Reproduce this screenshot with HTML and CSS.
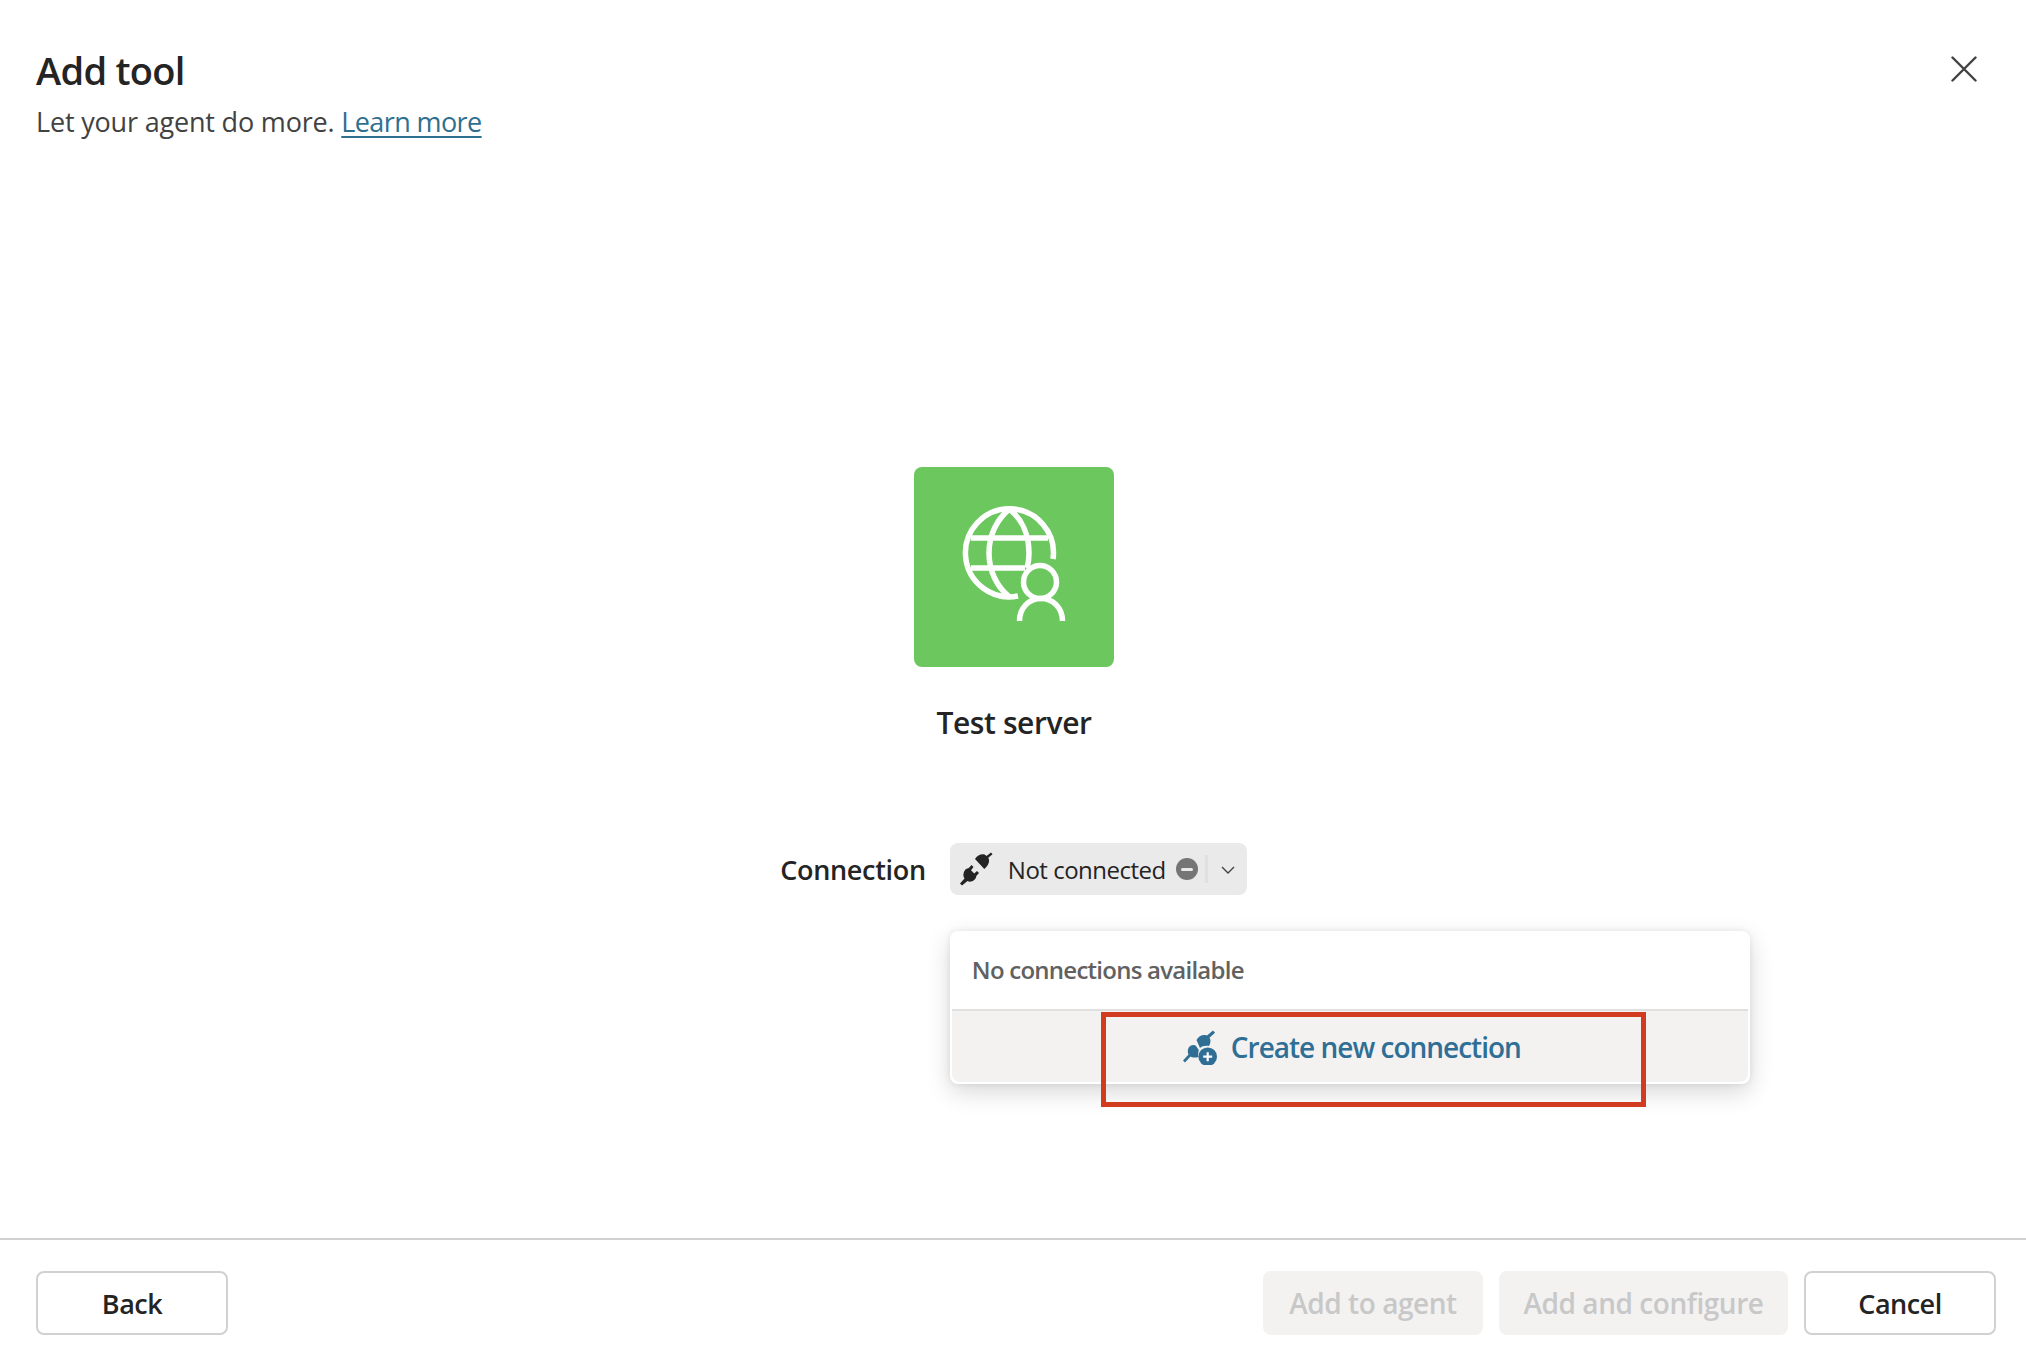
FILE: index.html
```html
<!DOCTYPE html>
<html lang="en">
<head>
<meta charset="utf-8">
<title>Add tool</title>
<link rel="stylesheet" href="styles.css">
</head>
<body>
<div class="dialog">
  <header class="head">
    <div class="head-text">
      <h1 class="title">Add tool</h1>
      <p class="subtitle">Let your agent do more. <a class="link" href="#">Learn more</a></p>
    </div>
    <button class="close" aria-label="Close">
      <svg width="26" height="26" viewBox="0 0 26 26"><path d="M1.500 1.500 L24.500 24.500 M24.500 1.500 L1.500 24.500" stroke="#424242" stroke-width="2.400" stroke-linecap="round" fill="none"/></svg>
    </button>
  </header>
  <main class="body">
    <div class="tile">
      <svg width="200" height="200" viewBox="0 0 200 200" fill="none" stroke="#fff" stroke-width="5.500">
        <path d="M139 92 A44 44 0 1 0 104 129"/>
        <path d="M95.500 42 C83 52 75 68 75 86 C75 104 83 120 95.500 130"/>
        <path d="M95.500 42 C108 52 115 68 115 86 C115 91 114.500 96 113 101"/>
        <path d="M57 71 H134 M57 101 H111"/>
        <circle cx="126" cy="115" r="16.500"/>
        <path d="M105.500 154 C105.500 141 115 131.500 127 131.500 C139 131.500 148.500 141 148.500 154"/>
      </svg>
    </div>
    <h2 class="name">Test server</h2>
    <div class="conn-row">
      <span class="conn-label">Connection</span>
      <div class="conn-wrap">
        <div class="pill">
          <svg class="plug" width="36" height="36" viewBox="0 0 36 36"><path fill="#242424" d="M16 8 C18 4.500 22 2.800 25.500 3.500 C26.500 4 27 4.500 27.500 5 L32 1.500 L33.500 3.300 L29.300 6.800 C31 10 30 14 25.300 18 Z"/><path fill="#242424" d="M7 18 L9.800 17 L12.500 14 L14.500 16 L12 19.300 L15.200 22.500 L18 20 L20 22 L17.300 25 C17 29 12 32 8.500 30 L3 34.500 L1 32.500 L5.500 27.500 C3.500 24 4.500 20.500 7 18 Z"/></svg>
          <span class="pill-text">Not connected</span>
          <span class="status"><span class="status-bar"></span></span>
          <span class="pill-div"></span>
          <svg class="chev" width="16" height="16" viewBox="0 0 16 16"><path d="M2 5 L8 11 L14 5" stroke="#424242" stroke-width="1.400" fill="none"/></svg>
        </div>
        <div class="popup">
          <div class="popup-head">No connections available</div>
          <div class="popup-action">
            <svg class="plug-add" width="36" height="36" viewBox="0 0 36 36"><path fill="#2f6f96" d="M13.500 11 C15.500 7 20 5 24 6.500 L30 1.500 L32 3.800 L26.500 8.800 C28 11 27.800 14 26 17 C22 16.500 18.500 17.500 17 19 Z"/><path fill="#2f6f96" d="M8 16.500 C10 15.500 12 16 13 17 L15.800 21 C15 24 15 27 15.500 28 C12 29 9 28.500 7.500 27.500 L2 33.500 L0 31.500 L5.500 25.500 C4 22 5 18 8 16.500 Z"/><circle cx="24.700" cy="27.700" r="9.300" fill="#2f6f96"/><path d="M24.700 23.200 V32.200 M20.200 27.700 H29.200" stroke="#fff" stroke-width="2.200"/></svg>
            <span>Create new connection</span>
          </div>
          <div class="callout"></div>
        </div>
      </div>
    </div>
  </main>
  <footer class="foot">
    <button class="btn btn-back">Back</button>
    <div class="foot-right">
      <button class="btn btn-off btn-agent">Add to agent</button>
      <button class="btn btn-off btn-config">Add and configure</button>
      <button class="btn btn-cancel">Cancel</button>
    </div>
  </footer>
</div>
</body>
</html>
```

FILE: styles.css
```css
* { box-sizing: border-box; }
html, body { margin: 0; height: 100%; background: #fff; }
body { font-family: "Open Sans", "Noto Sans", "Liberation Sans", sans-serif; color: #242424; overflow: hidden; }
.dialog { height: 1352px; display: flex; flex-direction: column; }
.head { display: flex; justify-content: space-between; align-items: flex-start; padding: 44px 49px 0 36px; height: 160px; }
.title { margin: 0; font-size: 38px; line-height: 52px; font-weight: 600; letter-spacing: -0.7px; }
.subtitle { margin: 8px 0 0; font-size: 27px; line-height: 36px; color: #424242; letter-spacing: -0.18px; }
.link { color: #2f6f8f; text-decoration: underline; text-underline-offset: 4px; letter-spacing: -0.6px; }
.close { border: 0; background: none; padding: 0; margin: 12px 0 0; width: 26px; height: 26px; }
.close svg { display: block; }
.body { flex: 1; display: flex; flex-direction: column; align-items: center; padding: 307px 0 0 2px; }
.tile { width: 200px; height: 200px; border-radius: 8px; background: #6cc75f; }
.tile svg { display: block; }
.name { margin: 32px 0 0; font-size: 30px; line-height: 48px; font-weight: 600; letter-spacing: -0.4px; }
.conn-row { display: flex; align-items: center; margin: 96px 1px 0 0; gap: 24px; }
.conn-label { font-size: 27px; font-weight: 600; letter-spacing: -0.3px; }
.conn-wrap { position: relative; }
.pill { width: 297px; height: 52px; border-radius: 8px; background: #ebeaea; display: flex; align-items: center; padding-left: 9px; }
.plug { flex: none; }
.pill-text { margin-left: 13px; font-size: 24px; letter-spacing: -0.5px; white-space: nowrap; }
.status { flex: none; position: absolute; left: 226px; top: 15px; width: 22px; height: 22px; border-radius: 50%; background: #757575; display: flex; align-items: center; justify-content: center; }
.status-bar { width: 12px; height: 3px; background: #ebeaea; border-radius: 2px; }
.pill-div { position: absolute; left: 255px; top: 12px; width: 3px; height: 28px; background: #e0e0e0; }
.chev { position: absolute; left: 270px; top: 19px; }
.popup { position: absolute; left: 0; top: 88px; width: 800px; height: 153px; border-radius: 8px; background: #fff; box-shadow: 0 8px 24px rgba(0,0,0,.16), 0 0 6px rgba(0,0,0,.08); display: flex; flex-direction: column; padding: 0 2px 2px; }
.popup-head { height: 80px; padding: 0 0 2px 20px; display: flex; align-items: center; font-size: 24px; font-weight: 600; color: #616161; letter-spacing: -0.75px; border-bottom: 2px solid #e0e0e0; flex: none; }
.popup-action { flex: 1; background: #f3f2f1; border-radius: 0 0 8px 8px; display: flex; align-items: center; justify-content: center; gap: 12px; font-size: 28px; font-weight: 600; color: #2f6f96; letter-spacing: -1px; padding-left: 4px; }
.plug-add { flex: none; }
.callout { position: absolute; left: 151px; top: 81px; width: 545px; height: 95px; border: 5px solid #d13b1f; pointer-events: none; }
.foot { height: 114px; border-top: 2px solid #d1d1d1; display: flex; justify-content: space-between; padding: 31px 30px 0 36px; flex: none; }
.foot-right { display: flex; gap: 16px; }
.btn { height: 64px; border-radius: 8px; font: 600 27px "Open Sans", "Noto Sans", sans-serif; letter-spacing: -0.5px; background: #fff; border: 2px solid #d1d1d1; color: #242424; padding: 0; }
.btn-back { width: 192px; }
.btn-cancel { width: 192px; }
.btn-off { background: #f3f2f1; border-color: #f3f2f1; color: #c8c8c8; font-size: 28px; letter-spacing: -0.45px; }
.btn-agent { width: 220px; }
.btn-config { width: 289px; }
```
